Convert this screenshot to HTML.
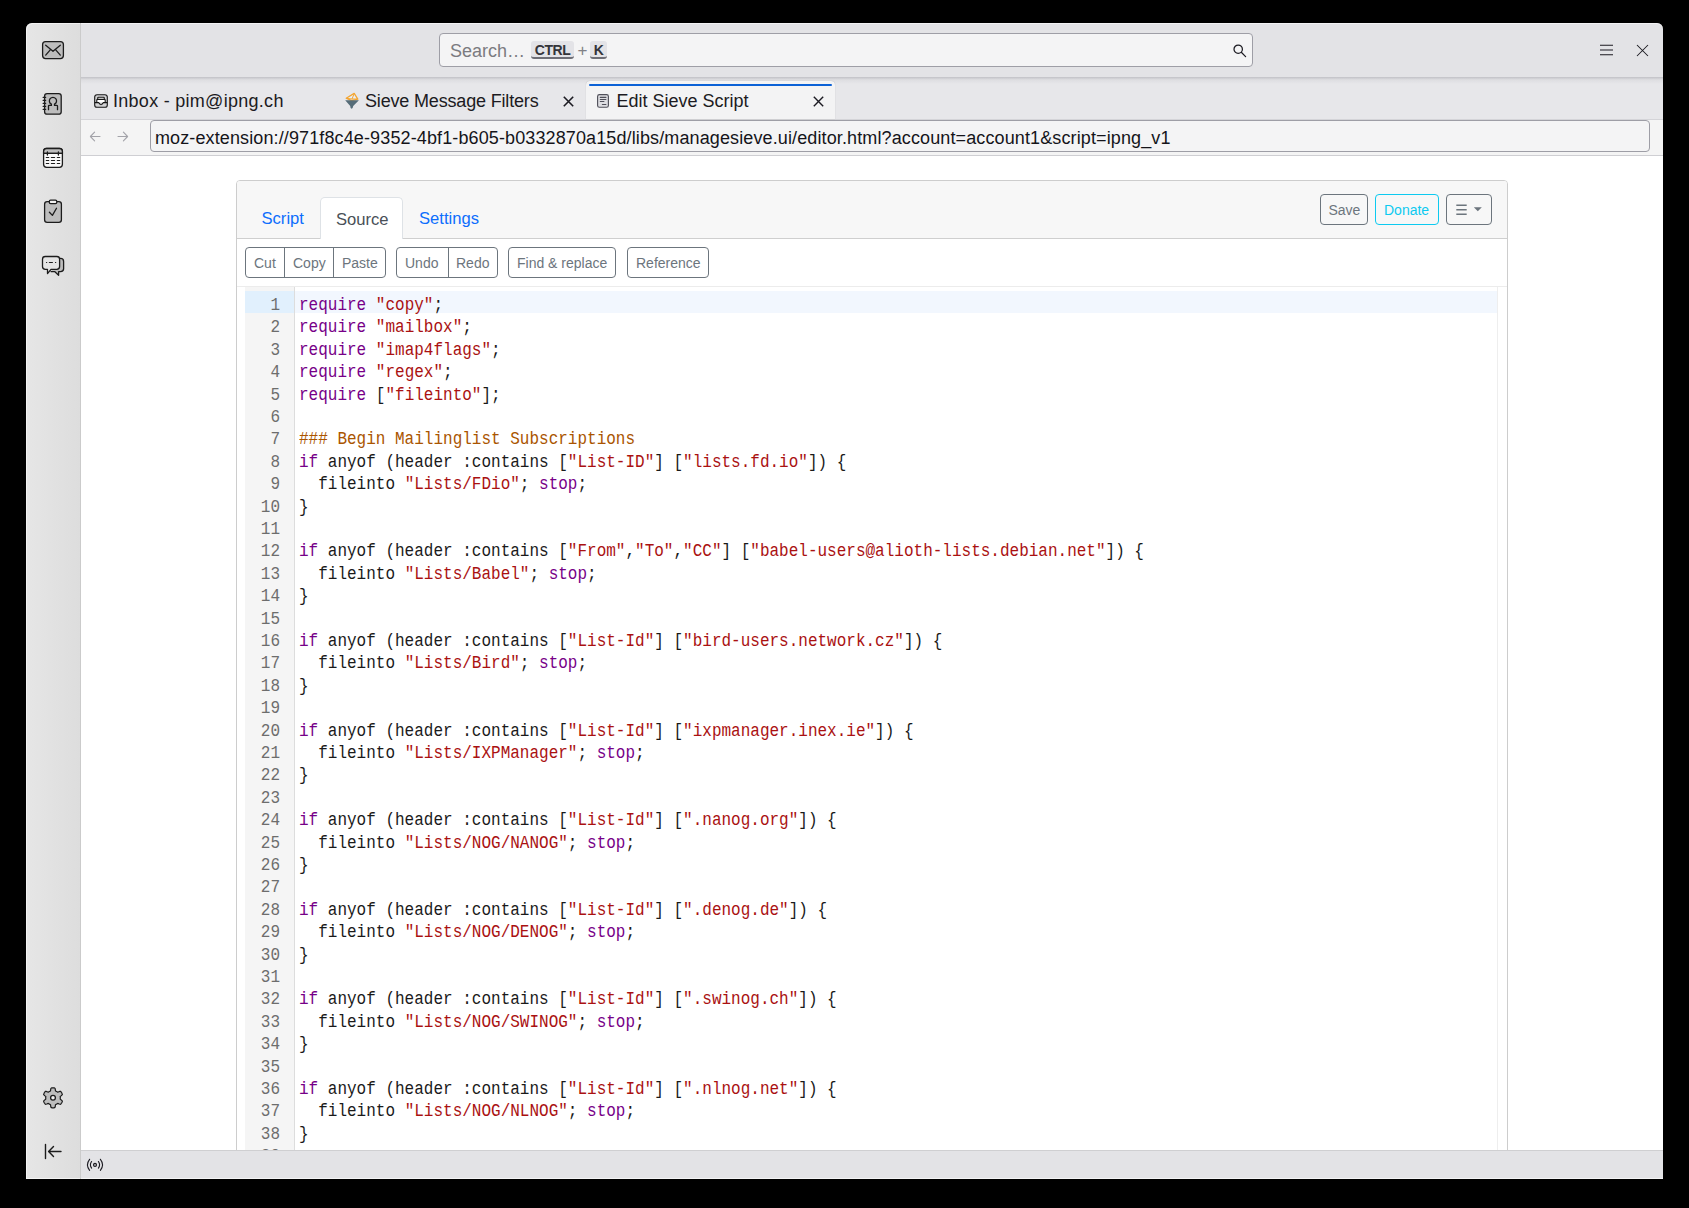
<!DOCTYPE html>
<html><head><meta charset="utf-8">
<style>
*{box-sizing:border-box;margin:0;padding:0}
html,body{width:1689px;height:1208px;overflow:hidden;background:#000}
body{position:relative;font-family:"Liberation Sans",sans-serif;color:#1c1b22}
div,span,svg{position:absolute;display:block}
i{font-style:normal}
#side{left:26px;top:23px;width:55px;height:1156px;box-shadow:inset 1px 1px 0 rgba(255,255,255,.55),inset 0 -1px 0 rgba(255,255,255,.6);background:linear-gradient(to right,#e6e6e6,#dddddd);border-right:1px solid #cbcbcb;border-top-left-radius:6px}
#title{left:81px;top:23px;width:1582px;height:54px;background:#e3e3e6;border-top-right-radius:6px;box-shadow:inset 0 1px 0 rgba(255,255,255,.55)}
#tabs{left:81px;top:77px;width:1582px;height:42px;background:#e7e7ea}
#tabshadow{left:81px;top:77px;width:1582px;height:7px;background:linear-gradient(rgba(170,170,176,.62),rgba(200,200,205,.3) 40%,rgba(232,232,235,0))}
#urlrow{left:81px;top:119px;width:1582px;height:37px;background:#f4f4f4;border-top:1px solid #d4d4d8;border-bottom:1px solid #cfcfd3}
#content{left:81px;top:156px;width:1582px;height:994px;background:#fff}
#status{left:81px;top:1150px;width:1582px;height:29px;background:#e3e3e6;border-top:1px solid #cfcfd1;box-shadow:inset 0 -1px 0 rgba(255,255,255,.6)}

#search{left:439px;top:33px;width:814px;height:34px;background:#f4f4f5;border:1px solid #9e9ea6;border-radius:4px}
#search .ph{left:10px;top:7px;font-size:18px;color:#7b7b80;white-space:pre}
.kbd{top:7px;height:18px;background:#e3e3e7;border-radius:3px;border-bottom:2px solid #6e6e76;font-size:14px;letter-spacing:-0.45px;font-weight:bold;color:#34343a;line-height:19px;text-align:center}
#plus{left:137.5px;top:7px;font-size:17px;color:#808085}

.tab{top:81px;height:39px;font-size:18px;white-space:pre}
.tab .t{top:10px}
#tab3{left:586px;width:249px;height:38px;background:#f3f3f4;border-radius:4px 4px 0 0;box-shadow:0 0 1px rgba(0,0,0,.25)}
#tab3 .bar{left:3px;top:3px;right:3px;height:2px;background:#0b61d6;border-radius:1px}

#url{left:150px;top:120px;width:1500px;height:32px;background:#f4f4f5;border:1px solid #9e9ea6;border-radius:4px}
#url .t{left:4px;top:6.5px;font-size:18px;letter-spacing:0.12px;white-space:pre;color:#15141a}

#card{left:236px;top:180px;width:1272px;height:975px;border:1px solid #cdcdcd;border-radius:4px;background:#fff;overflow:hidden}
#chead{left:0;top:0;width:1270px;height:58px;background:#f7f7f7;border-bottom:1px solid #cfcfcf}
.nav{top:16px;height:42px;font-size:16.6px;color:#0d6efd;white-space:pre}
.nav .t{top:12.3px}
#nsrc{left:83px;width:83px;background:#fff;border:1px solid #dee2e6;border-bottom:none;border-radius:5px 5px 0 0;color:#495057}
.btn{height:31px;border:1px solid #6c757d;border-radius:4px;font-size:14px;color:#6c757d;white-space:pre;background:transparent}
.btn .t{top:7px}
.grp{height:31px;border:1px solid #6c757d;border-radius:4px}
.dv{top:0;width:1px;height:29px;background:#6c757d}
#tbar{left:0;top:58px;width:1270px;height:48px;border-bottom:1px solid #ececec}

#editor{left:8px;top:106px;width:1253px;height:900px;background:#fff;border-right:1px solid #eeeeee}
#gutter{left:0;top:0;width:50px;height:900px;background:#f5f5f5;border-right:1px solid #dddddd}
#gl p{position:absolute;right:0;transform:scaleY(1.15);transform-origin:0 14px;width:50px;height:22.4px;line-height:22.4px;text-align:right;padding-right:14px;font-family:"Liberation Mono",monospace;font-size:16px;color:#6d6d6d}
#cl p{position:absolute;left:0;transform:scaleY(1.15);transform-origin:0 14px;height:22.4px;line-height:22.4px;white-space:pre;font-family:"Liberation Mono",monospace;font-size:16px;color:#1a1a1a}
.k{color:#770088}.s{color:#aa1111}.c{color:#aa5500}
</style></head>
<body>
<div id="side"></div>
<div id="title"></div>
<div id="tabs"></div>
<div id="tabshadow"></div>
<div id="urlrow"></div>
<div id="content"></div>

<!-- sidebar icons -->
<svg style="left:26px;top:23px" width="55" height="1155" viewBox="26 23 55 1155" fill="none" stroke="#1c1c1c" stroke-width="1.3" stroke-linejoin="round" stroke-linecap="round">
  <!-- mail -->
  <rect x="42.6" y="41.6" width="20.8" height="17" rx="3" fill="#bdbdbd"/>
  <path d="M45.7 45.2 L53 51.3 L60.3 45.2 M45.7 55.1 L50.7 49.4 M60.3 55.1 L55.3 49.4"/>
  <!-- address book -->
  <rect x="44.6" y="93.6" width="16.6" height="20.6" rx="2.5" fill="#bdbdbd"/>
  <path d="M43.2 97.4h2.4M43.2 100.4h2.4M43.2 103.4h2.4M43.2 106.4h2.4M43.2 109.4h2.4"/>
  <path d="M48.5 109.7 V106 Q48.5 105.4 49.3 105.4 H51.4 V104.2 A3.6 3.6 0 1 1 54.5 104.2 V105.4 H56.6 Q57.5 105.4 57.5 106 V109.7" fill="none"/>
  <!-- calendar -->
  <rect x="43.6" y="148.5" width="18.8" height="18.8" rx="3" fill="#fafafa"/>
  <path d="M43.6 153.4 V151.5 Q43.6 148.5 46.6 148.5 H59.4 Q62.4 148.5 62.4 151.5 V153.4 Z" fill="#bdbdbd"/>
  <path d="M43.6 153.4 H62.4 M47.4 152 V155 M58.4 152 V155"/>
  <path d="M46.3 157.5h2.4M51.4 157.5h3.2M57.3 157.5h2.4M46.3 160.5h2.4M51.4 160.5h3.2M57.3 160.5h2.4M46.3 163.5h2.4M51.4 163.5h3.2M57.3 163.5h2.4" stroke-width="1.2"/>
  <!-- tasks -->
  <path d="M49 201.6 H47.2 Q44.6 201.6 44.6 204.2 V219.8 Q44.6 222.4 47.2 222.4 H58.8 Q61.4 222.4 61.4 219.8 V204.2 Q61.4 201.6 58.8 201.6 H57" fill="#bdbdbd"/>
  <rect x="49.3" y="200.2" width="7.5" height="3.4" rx="1.3" fill="#f4f4f4"/>
  <path d="M49.4 212.3 L52.4 215.4 L56.5 208.2"/>
  <!-- chat -->
  <path d="M59.5 258.4 H60.6 Q63.6 258.4 63.6 261.4 V268.8 Q63.6 271.6 60.6 271.6 H58.6 V275.3 L54.6 271.6 H51" fill="#bdbdbd"/>
  <path d="M45.3 256.5 H56.8 Q59.6 256.5 59.6 259.3 V266.6 Q59.6 269.4 56.8 269.4 H51 L47.5 273.6 V269.4 H45.3 Q42.5 269.4 42.5 266.6 V259.3 Q42.5 256.5 45.3 256.5 Z" fill="#e4e4e4"/>
  <path d="M46.5 262.5h0.2M49.4 262.5h3M55.5 262.5h0.2" stroke-width="1.2"/>
  <!-- gear -->
  <path fill="#bdbdbd" stroke-width="1.2" d="M60.3 1097.8 L60.3 1097.5 L60.3 1097.2 L60.2 1096.8 L60.2 1096.5 L60.7 1096.1 L61.4 1095.5 L62.1 1094.9 L62.4 1094.4 L62.2 1094.0 L62.1 1093.6 L61.9 1093.2 L61.7 1092.8 L61.4 1092.4 L61.2 1092.1 L60.9 1091.7 L60.7 1091.4 L60.1 1091.3 L59.2 1091.6 L58.3 1092.0 L57.7 1092.2 L57.4 1092.0 L57.2 1091.8 L56.9 1091.6 L56.6 1091.5 L56.4 1091.3 L56.1 1091.2 L55.8 1091.1 L55.5 1090.9 L55.4 1090.3 L55.3 1089.4 L55.1 1088.5 L54.7 1088.0 L54.3 1087.9 L53.9 1087.8 L53.4 1087.8 L53.0 1087.8 L52.6 1087.8 L52.1 1087.8 L51.7 1087.9 L51.3 1088.0 L50.9 1088.5 L50.7 1089.4 L50.6 1090.3 L50.5 1090.9 L50.2 1091.1 L49.9 1091.2 L49.6 1091.3 L49.4 1091.5 L49.1 1091.6 L48.8 1091.8 L48.6 1092.0 L48.3 1092.2 L47.7 1092.0 L46.8 1091.6 L45.9 1091.3 L45.3 1091.4 L45.1 1091.7 L44.8 1092.1 L44.6 1092.4 L44.3 1092.8 L44.1 1093.2 L43.9 1093.6 L43.8 1094.0 L43.6 1094.4 L43.9 1094.9 L44.6 1095.5 L45.3 1096.1 L45.8 1096.5 L45.8 1096.8 L45.7 1097.2 L45.7 1097.5 L45.7 1097.8 L45.7 1098.1 L45.7 1098.4 L45.8 1098.8 L45.8 1099.1 L45.3 1099.5 L44.6 1100.1 L43.9 1100.7 L43.6 1101.2 L43.8 1101.6 L43.9 1102.0 L44.1 1102.4 L44.3 1102.8 L44.6 1103.2 L44.8 1103.5 L45.1 1103.9 L45.3 1104.2 L45.9 1104.3 L46.8 1104.0 L47.7 1103.6 L48.3 1103.4 L48.6 1103.6 L48.8 1103.8 L49.1 1104.0 L49.3 1104.1 L49.6 1104.3 L49.9 1104.4 L50.2 1104.5 L50.5 1104.7 L50.6 1105.3 L50.7 1106.2 L50.9 1107.1 L51.3 1107.6 L51.7 1107.7 L52.1 1107.8 L52.6 1107.8 L53.0 1107.8 L53.4 1107.8 L53.9 1107.8 L54.3 1107.7 L54.7 1107.6 L55.1 1107.1 L55.3 1106.2 L55.4 1105.3 L55.5 1104.7 L55.8 1104.5 L56.1 1104.4 L56.4 1104.3 L56.6 1104.1 L56.9 1104.0 L57.2 1103.8 L57.4 1103.6 L57.7 1103.4 L58.3 1103.6 L59.2 1104.0 L60.1 1104.3 L60.7 1104.2 L60.9 1103.9 L61.2 1103.5 L61.4 1103.2 L61.7 1102.8 L61.9 1102.4 L62.1 1102.0 L62.2 1101.6 L62.4 1101.2 L62.1 1100.7 L61.4 1100.1 L60.7 1099.5 L60.2 1099.1 L60.2 1098.8 L60.3 1098.4 L60.3 1098.1Z"/>
  <circle cx="53" cy="1097.8" r="2.4" fill="#f2f2f2"/>
  <!-- collapse -->
  <path d="M45.5 1144.4 V1158.6 M61 1151.5 H48.8 M53.5 1146.4 L48.6 1151.5 L53.5 1156.6" stroke-width="1.4"/>
</svg>

<!-- title bar -->
<div id="search">
  <span class="ph">Search…</span>
  <span class="kbd" style="left:91px;width:43px">CTRL</span>
  <span id="plus">+</span>
  <span class="kbd" style="left:150px;width:17px">K</span>
  <svg style="left:793px;top:10px" width="14" height="14" viewBox="0 0 14 14" fill="none" stroke="#1c1b22" stroke-width="1.25"><circle cx="5.2" cy="5.2" r="4.2"/><path d="M8.3 8.3 L12.6 12.6" stroke-linecap="round"/></svg>
</div>
<svg style="left:1596px;top:40px" width="60" height="20" viewBox="1596 40 60 20" fill="none" stroke="#1c1b22" stroke-width="1.05">
  <path d="M1600 45.3h13M1600 50h13M1600 54.7h13"/>
  <path d="M1637 45 L1648 56 M1648 45 L1637 56"/>
</svg>

<!-- tabs -->
<div class="tab" style="left:81px;width:240px">
  <svg style="left:12px;top:12px" width="16" height="16" viewBox="93 93 16 16" fill="none" stroke="#141414" stroke-width="1.1" stroke-linejoin="round"><rect x="94.7" y="94.7" width="12.6" height="12.6" rx="2.4" fill="#d2d2d4"/><path d="M96.8 102.6 V100.2 Q96.8 99.4 97.6 99.4 H104.4 Q105.2 99.4 105.2 100.2 V102.6 Z" fill="#fff" stroke="none"/><path d="M96.8 102.6 V100.2 Q96.8 99.4 97.6 99.4 H104.4 Q105.2 99.4 105.2 100.2 V102.6"/><rect x="97.7" y="97.3" width="6.6" height="2.1" rx="0.8" fill="#fff"/><path d="M94.7 102.6 H98.6 L100.2 104.4 Q101 105 101.8 104.4 L103.4 102.6 H107.3"/></svg>
  <span class="t" style="left:32px;letter-spacing:0.28px">Inbox - pim@ipng.ch</span>
</div>
<div class="tab" style="left:335px;width:250px">
  <svg style="left:9px;top:11px" width="16" height="17" viewBox="344 92 16 17"><path d="M346.2 98.2 L354.2 93.4 L357.8 99.2 L351.6 100.6 Z" fill="#e8eef6" stroke="#f4a531" stroke-width="1.3" stroke-linejoin="round"/><path d="M346.4 98.4 L352 99 L354.2 93.6 M352 99 L357.6 99" fill="none" stroke="#f4a531" stroke-width="1"/><path d="M345.2 100.3 H358.9 L353.2 106 Q352.8 108.8 351.6 108.8 Q350.4 108.8 350.2 106 Z" fill="#566c78"/></svg>
  <span class="t" style="left:30px;letter-spacing:-0.17px">Sieve Message Filters</span>
  <svg style="left:228px;top:15px" width="11" height="11" viewBox="0 0 11 11" stroke="#1c1b22" stroke-width="1.6"><path d="M0.8 0.8 L10.2 10.2 M10.2 0.8 L0.8 10.2"/></svg>
</div>
<div class="tab" id="tab3">
  <div class="bar"></div>
  <svg style="left:10px;top:12px" width="14" height="15" viewBox="596 93 14 15" fill="none" stroke="#50505a" stroke-width="1.15" stroke-linecap="round"><rect x="597.6" y="94.6" width="10.8" height="12.6" rx="1.8" fill="#dedee2"/><path d="M600.3 97.4h5.6M600.3 99.5h5.6M600.3 101.5h3.6M602.4 104.5h3.5"/></svg>
  <span class="t" style="left:30.5px">Edit Sieve Script</span>
  <svg style="left:227px;top:15px" width="11" height="11" viewBox="0 0 11 11" stroke="#1c1b22" stroke-width="1.4"><path d="M0.8 0.8 L10.2 10.2 M10.2 0.8 L0.8 10.2"/></svg>
</div>

<!-- url row -->
<svg style="left:86px;top:128px" width="50" height="18" viewBox="86 128 50 18" fill="none" stroke="#a3a3a9" stroke-width="1.1" stroke-linecap="round" stroke-linejoin="round"><path d="M94.6 132.2 L90.4 136.5 L94.6 140.8 M90.6 136.5 H100"/><path d="M123.4 132.2 L127.6 136.5 L123.4 140.8 M127.4 136.5 H118"/></svg>
<div id="url"><span class="t">moz-extension://971f8c4e-9352-4bf1-b605-b0332870a15d/libs/managesieve.ui/editor.html?account=account1&amp;script=ipng_v1</span></div>

<!-- card -->
<div id="card">
  <div id="chead">
    <div class="nav" style="left:10px;width:73px"><span class="t" style="left:14.5px">Script</span></div>
    <div class="nav" id="nsrc"><span class="t" style="left:15px">Source</span></div>
    <div class="nav" style="left:166px;width:90px"><span class="t" style="left:16px">Settings</span></div>
    <div class="btn" style="left:1083px;top:13px;width:48px"><span class="t" style="left:7.5px">Save</span></div>
    <div class="btn" style="left:1138px;top:13px;width:64px;border-color:#0dcaf0;color:#0dcaf0"><span class="t" style="left:8px">Donate</span></div>
    <div class="btn" style="left:1209px;top:13px;width:46px">
      <svg style="left:8px;top:9px" width="30" height="13" viewBox="0 0 30 13"><path d="M1.3 1.3h10.4M1.3 5.8h10.4M1.3 10.3h10.4" stroke="#6c757d" stroke-width="1.5"/><path d="M18.8 3.2 H26.8 L22.8 7.2 Z" fill="#6c757d"/></svg>
    </div>
  </div>
  <div id="tbar">
    <div class="grp" style="left:8px;top:8px;width:141px">
      <div class="dv" style="left:38px"></div><div class="dv" style="left:87px"></div>
      <span class="btn t" style="border:none;left:8px;top:7px">Cut</span>
      <span class="btn t" style="border:none;left:47px;top:7px">Copy</span>
      <span class="btn t" style="border:none;left:96px;top:7px">Paste</span>
    </div>
    <div class="grp" style="left:159px;top:8px;width:102px">
      <div class="dv" style="left:51px"></div>
      <span class="btn t" style="border:none;left:8px;top:7px">Undo</span>
      <span class="btn t" style="border:none;left:59px;top:7px">Redo</span>
    </div>
    <div class="btn" style="left:271px;top:8px;width:108px"><span class="t" style="left:8px">Find &amp; replace</span></div>
    <div class="btn" style="left:390px;top:8px;width:82px"><span class="t" style="left:8px">Reference</span></div>
  </div>
  <div id="editor">
    <div id="gutter"><div style="left:0;top:4px;width:49px;height:22.4px;background:#e1f0fd"></div><div id="gl" style="left:0;top:8px;width:49px;height:900px"><p style="top:0.0px">1</p>
<p style="top:22.4px">2</p>
<p style="top:44.8px">3</p>
<p style="top:67.2px">4</p>
<p style="top:89.6px">5</p>
<p style="top:112.0px">6</p>
<p style="top:134.4px">7</p>
<p style="top:156.8px">8</p>
<p style="top:179.2px">9</p>
<p style="top:201.6px">10</p>
<p style="top:224.0px">11</p>
<p style="top:246.4px">12</p>
<p style="top:268.8px">13</p>
<p style="top:291.2px">14</p>
<p style="top:313.6px">15</p>
<p style="top:336.0px">16</p>
<p style="top:358.4px">17</p>
<p style="top:380.8px">18</p>
<p style="top:403.2px">19</p>
<p style="top:425.6px">20</p>
<p style="top:448.0px">21</p>
<p style="top:470.4px">22</p>
<p style="top:492.8px">23</p>
<p style="top:515.2px">24</p>
<p style="top:537.6px">25</p>
<p style="top:560.0px">26</p>
<p style="top:582.4px">27</p>
<p style="top:604.8px">28</p>
<p style="top:627.2px">29</p>
<p style="top:649.6px">30</p>
<p style="top:672.0px">31</p>
<p style="top:694.4px">32</p>
<p style="top:716.8px">33</p>
<p style="top:739.2px">34</p>
<p style="top:761.6px">35</p>
<p style="top:784.0px">36</p>
<p style="top:806.4px">37</p>
<p style="top:828.8px">38</p>
<p style="top:851.2px">39</p></div></div>
    <div style="left:50px;top:4px;width:1202px;height:22.4px;background:#f2f7fe"></div>
    <div id="cl" style="left:54px;top:8px;width:1190px;height:900px"><p style="top:0.0px"><i class="k">require</i> <i class="s">"copy"</i>;</p>
<p style="top:22.4px"><i class="k">require</i> <i class="s">"mailbox"</i>;</p>
<p style="top:44.8px"><i class="k">require</i> <i class="s">"imap4flags"</i>;</p>
<p style="top:67.2px"><i class="k">require</i> <i class="s">"regex"</i>;</p>
<p style="top:89.6px"><i class="k">require</i> [<i class="s">"fileinto"</i>];</p>
<p style="top:112.0px"></p>
<p style="top:134.4px"><i class="c">### Begin Mailinglist Subscriptions</i></p>
<p style="top:156.8px"><i class="k">if</i> anyof (header :contains [<i class="s">"List-ID"</i>] [<i class="s">"lists.fd.io"</i>]) {</p>
<p style="top:179.2px">  fileinto <i class="s">"Lists/FDio"</i>; <i class="k">stop</i>;</p>
<p style="top:201.6px">}</p>
<p style="top:224.0px"></p>
<p style="top:246.4px"><i class="k">if</i> anyof (header :contains [<i class="s">"From"</i>,<i class="s">"To"</i>,<i class="s">"CC"</i>] [<i class="s">"babel-users@alioth-lists.debian.net"</i>]) {</p>
<p style="top:268.8px">  fileinto <i class="s">"Lists/Babel"</i>; <i class="k">stop</i>;</p>
<p style="top:291.2px">}</p>
<p style="top:313.6px"></p>
<p style="top:336.0px"><i class="k">if</i> anyof (header :contains [<i class="s">"List-Id"</i>] [<i class="s">"bird-users.network.cz"</i>]) {</p>
<p style="top:358.4px">  fileinto <i class="s">"Lists/Bird"</i>; <i class="k">stop</i>;</p>
<p style="top:380.8px">}</p>
<p style="top:403.2px"></p>
<p style="top:425.6px"><i class="k">if</i> anyof (header :contains [<i class="s">"List-Id"</i>] [<i class="s">"ixpmanager.inex.ie"</i>]) {</p>
<p style="top:448.0px">  fileinto <i class="s">"Lists/IXPManager"</i>; <i class="k">stop</i>;</p>
<p style="top:470.4px">}</p>
<p style="top:492.8px"></p>
<p style="top:515.2px"><i class="k">if</i> anyof (header :contains [<i class="s">"List-Id"</i>] [<i class="s">".nanog.org"</i>]) {</p>
<p style="top:537.6px">  fileinto <i class="s">"Lists/NOG/NANOG"</i>; <i class="k">stop</i>;</p>
<p style="top:560.0px">}</p>
<p style="top:582.4px"></p>
<p style="top:604.8px"><i class="k">if</i> anyof (header :contains [<i class="s">"List-Id"</i>] [<i class="s">".denog.de"</i>]) {</p>
<p style="top:627.2px">  fileinto <i class="s">"Lists/NOG/DENOG"</i>; <i class="k">stop</i>;</p>
<p style="top:649.6px">}</p>
<p style="top:672.0px"></p>
<p style="top:694.4px"><i class="k">if</i> anyof (header :contains [<i class="s">"List-Id"</i>] [<i class="s">".swinog.ch"</i>]) {</p>
<p style="top:716.8px">  fileinto <i class="s">"Lists/NOG/SWINOG"</i>; <i class="k">stop</i>;</p>
<p style="top:739.2px">}</p>
<p style="top:761.6px"></p>
<p style="top:784.0px"><i class="k">if</i> anyof (header :contains [<i class="s">"List-Id"</i>] [<i class="s">".nlnog.net"</i>]) {</p>
<p style="top:806.4px">  fileinto <i class="s">"Lists/NOG/NLNOG"</i>; <i class="k">stop</i>;</p>
<p style="top:828.8px">}</p>
<p style="top:851.2px"></p></div>
  </div>
</div>
<div id="status"></div>
<svg style="left:84px;top:1156px" width="22" height="18" viewBox="84 1156 22 18" fill="none" stroke="#1c1b22" stroke-width="1.1" stroke-linecap="round"><path d="M89.6 1159.3 Q85.3 1164.8 89.6 1170.3 M100.4 1159.3 Q104.7 1164.8 100.4 1170.3 M91.6 1161.5 Q89.2 1164.8 91.6 1168.1 M98.4 1161.5 Q100.8 1164.8 98.4 1168.1"/><circle cx="95" cy="1164.9" r="1.5" fill="#b8b8bc"/></svg>
</body></html>
